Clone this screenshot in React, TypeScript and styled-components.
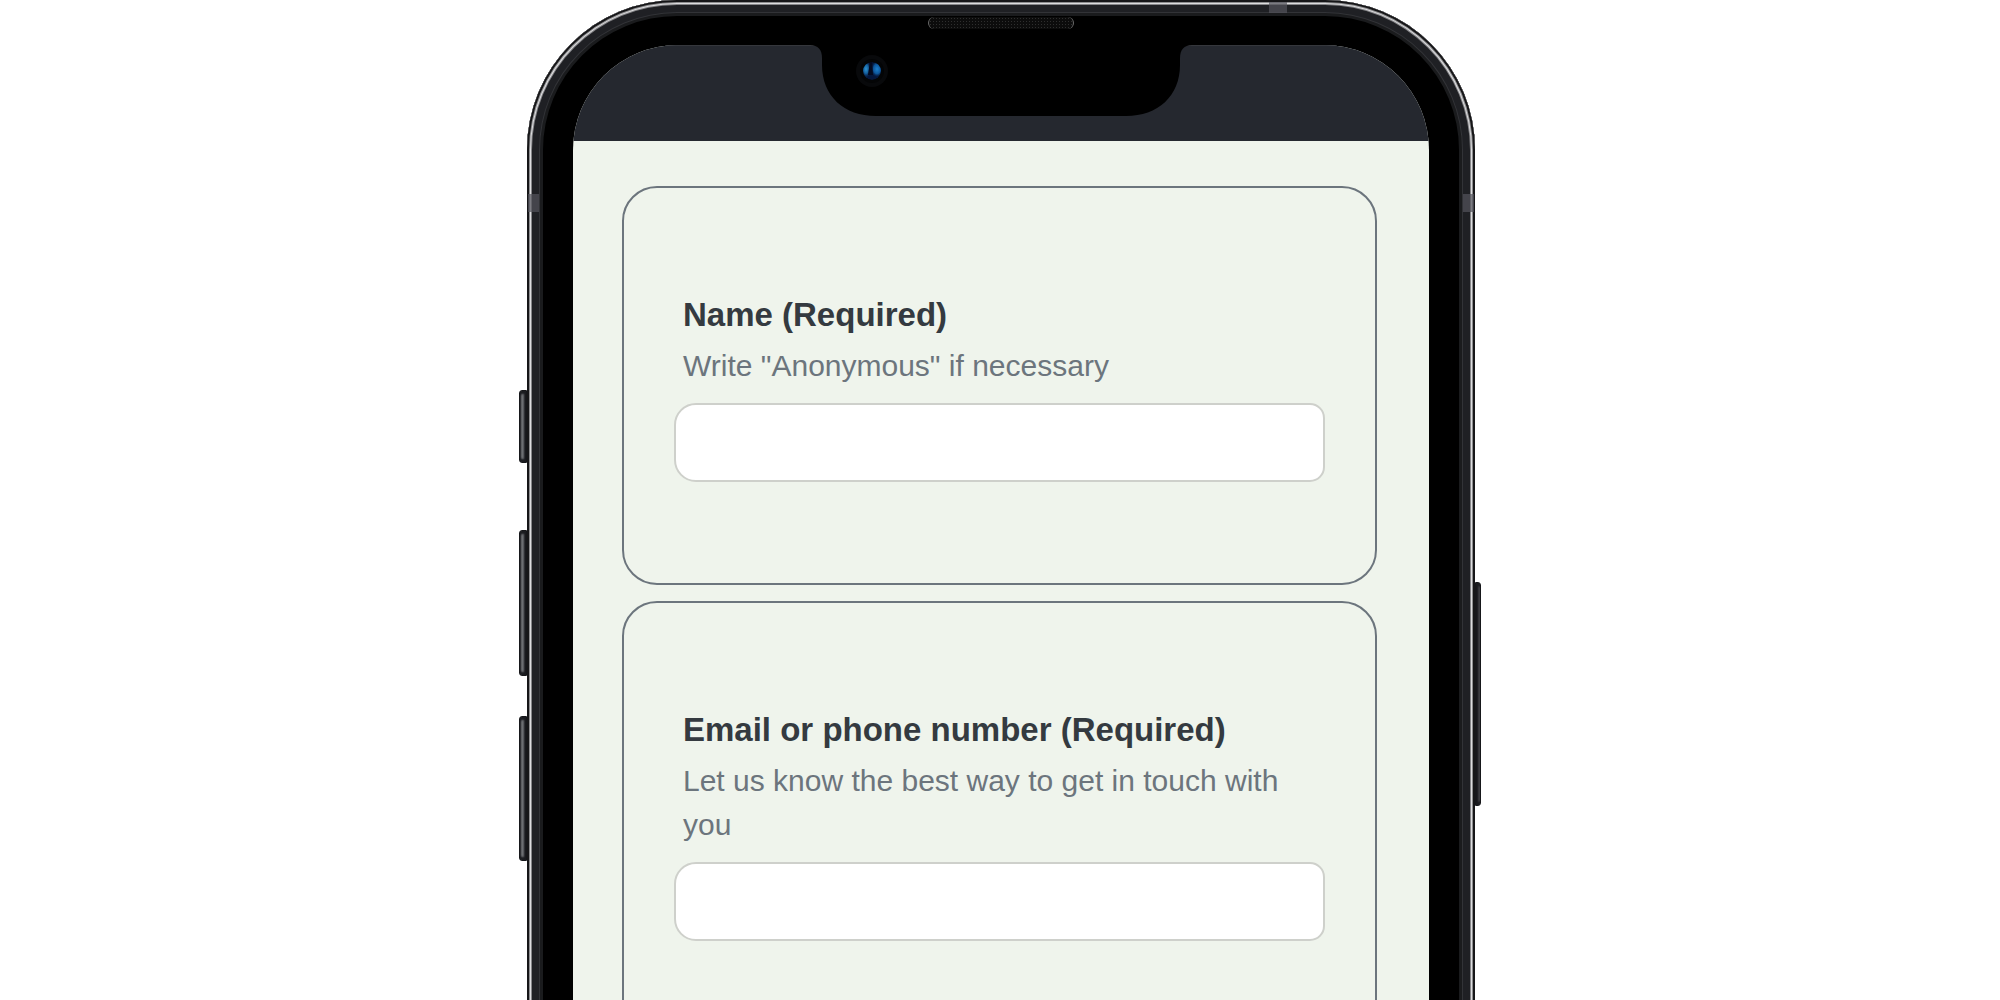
import React, { useId } from "react";
import styled, { createGlobalStyle } from "styled-components";

const GlobalStyle = createGlobalStyle`
  *, *::before, *::after { box-sizing: border-box; }
  body {
    margin: 0;
    background: #ffffff;
    font-family: "Liberation Sans", Arial, Helvetica, sans-serif;
  }
`;

const Page = styled.main`
  display: flex;
  justify-content: center;
  align-items: flex-start;
  height: 100vh;
  overflow: hidden;
`;

const KeyRail = styled.div<{ $side: "left" | "right" }>`
  flex: none;
  width: ${(p) => (p.$side === "left" ? 8 : 6)}px;
  padding-top: ${(p) => (p.$side === "left" ? 390 : 582)}px;
`;

const SideKey = styled.div<{ $side: "left" | "right"; $height: number; $gap?: number }>`
  height: ${(p) => p.$height}px;
  margin-bottom: ${(p) => p.$gap ?? 0}px;
  border: 1px solid #16171a;
  border-radius: ${(p) => (p.$side === "left" ? "3px 0 0 3px" : "0 3px 3px 0")};
  background: ${(p) =>
    p.$side === "left"
      ? "linear-gradient(90deg, #2c2e32 0, #77797d 2px, #4b4d51 4px, #1b1c20 5px)"
      : "linear-gradient(90deg, #101014 0, #26262b 2px, #6a6a70 4px)"};
  box-shadow:
    inset 0 3px 2px #1b1c20,
    inset 0 -3px 2px #1b1c20;
`;

const Body = styled.div`
  position: relative;
  flex: 0 1 948px;
  min-width: 0;
  padding: 45px 46px;
  border-radius: 150px;
  background: #000000;
  box-shadow:
    inset 0 0 0 2px #161618,
    inset 0 0 0 3px #8d8d8f,
    inset 0 0 0 4px #dcdcde,
    inset 0 0 0 5px #858588,
    inset 0 0 0 12px #1f2024,
    inset 0 0 0 13px #323337,
    inset 0 0 0 16px #1a1b1d;
`;

const Antenna = styled.span<{ $edge: "left" | "right" | "top" }>`
  position: absolute;
  background: rgba(84, 84, 92, 0.7);
  ${(p) =>
    p.$edge === "top"
      ? "top: 2px; right: 188px; width: 18px; height: 11px;"
      : `top: 194px; ${p.$edge}: 1px; width: 11px; height: 18px;`}
`;

const Speaker = styled.span`
  position: absolute;
  top: 17px;
  left: 50%;
  width: 146px;
  height: 12px;
  margin-left: -73px;
  border: solid #6a6a6a;
  border-width: 0 1px;
  border-radius: 6px;
  background:
    radial-gradient(circle, #2e2e2e 35%, transparent 45%) 0 0 / 3px 3px,
    #0c0c0c;
`;

const Notch = styled.svg`
  position: absolute;
  top: 44px;
  left: 50%;
  margin-left: -193px;
  display: block;
`;

const Screen = styled.div`
  overflow: hidden;
  border-radius: 105px;
  background: #eff4ec;
`;

const StatusBar = styled.div`
  height: 96px;
  background: #25282f;
  border-top: 1px solid #35373c;
`;

const Form = styled.form`
  display: grid;
  gap: 16px;
  padding: 45px 52px 120px 49px;
`;

const Card = styled.div`
  display: flex;
  flex-direction: column;
  padding: 102px 50px 101px;
  border: 2px solid #6c757d;
  border-radius: 35px;
`;

const Label = styled.label`
  padding: 0 9px;
  margin-bottom: 4px;
  color: #343a40;
  font-size: 33px;
  font-weight: 700;
  line-height: 50px;
`;

const Hint = styled.p`
  margin: 0 0 15px;
  padding: 0 9px;
  color: #6c757d;
  font-size: 30px;
  line-height: 44px;
`;

const TextBox = styled.input`
  width: 100%;
  height: 79px;
  padding: 0 20px;
  border: 2px solid #ced0cb;
  border-radius: 22px 15px 15px 22px;
  background: #ffffff;
  color: #343a40;
  font: inherit;
  font-size: 30px;
`;

function Field({ label, hint, name }: { label: string; hint: string; name: string }) {
  const id = useId();
  return (
    <Card>
      <Label htmlFor={id}>{label}</Label>
      <Hint id={`${id}-hint`}>{hint}</Hint>
      <TextBox id={id} name={name} type="text" required aria-describedby={`${id}-hint`} />
    </Card>
  );
}

function CameraNotch() {
  return (
    <Notch width="386" height="72" viewBox="0 0 386 72" aria-hidden="true">
      <defs>
        <radialGradient id="lensLeft">
          <stop offset="0" stopColor="#2f93cf" />
          <stop offset="0.5" stopColor="#14609e" />
          <stop offset="1" stopColor="#07264f" stopOpacity="0" />
        </radialGradient>
        <radialGradient id="lensRight">
          <stop offset="0" stopColor="#1c80cc" />
          <stop offset="0.6" stopColor="#0d559a" />
          <stop offset="1" stopColor="#07264f" stopOpacity="0" />
        </radialGradient>
        <clipPath id="lens">
          <circle cx="64" cy="27" r="9" />
        </clipPath>
      </defs>
      <path
        d="M0 0V1H2C10 1 14 6 14 14V21C14 52 36 72 68 72H318C350 72 372 52 372 21V14C372 6 376 1 384 1H386V0Z"
        fill="#000000"
      />
      <circle cx="64" cy="27" r="16" fill="#08090b" />
      <circle cx="64" cy="27" r="12" fill="#040506" />
      <g clipPath="url(#lens)">
        <circle cx="64" cy="27" r="9" fill="#04163c" />
        <ellipse cx="58" cy="25" rx="5" ry="9" fill="url(#lensLeft)" />
        <ellipse cx="69" cy="25" rx="6" ry="8" fill="url(#lensRight)" />
        <path d="M62 17L60 31L65 31L64 17Z" fill="#030a20" />
      </g>
    </Notch>
  );
}

export default function App() {
  return (
    <>
      <GlobalStyle />
      <Page>
        <KeyRail $side="left">
          <SideKey $side="left" $height={73} $gap={67} />
          <SideKey $side="left" $height={146} $gap={40} />
          <SideKey $side="left" $height={145} />
        </KeyRail>
        <Body>
          <Screen>
            <StatusBar />
            <Form>
              <Field name="name" label="Name (Required)" hint={'Write "Anonymous" if necessary'} />
              <Field
                name="contact"
                label="Email or phone number (Required)"
                hint="Let us know the best way to get in touch with you"
              />
            </Form>
          </Screen>
          <Antenna $edge="left" />
          <Antenna $edge="right" />
          <Antenna $edge="top" />
          <Speaker />
          <CameraNotch />
        </Body>
        <KeyRail $side="right">
          <SideKey $side="right" $height={224} />
        </KeyRail>
      </Page>
    </>
  );
}
